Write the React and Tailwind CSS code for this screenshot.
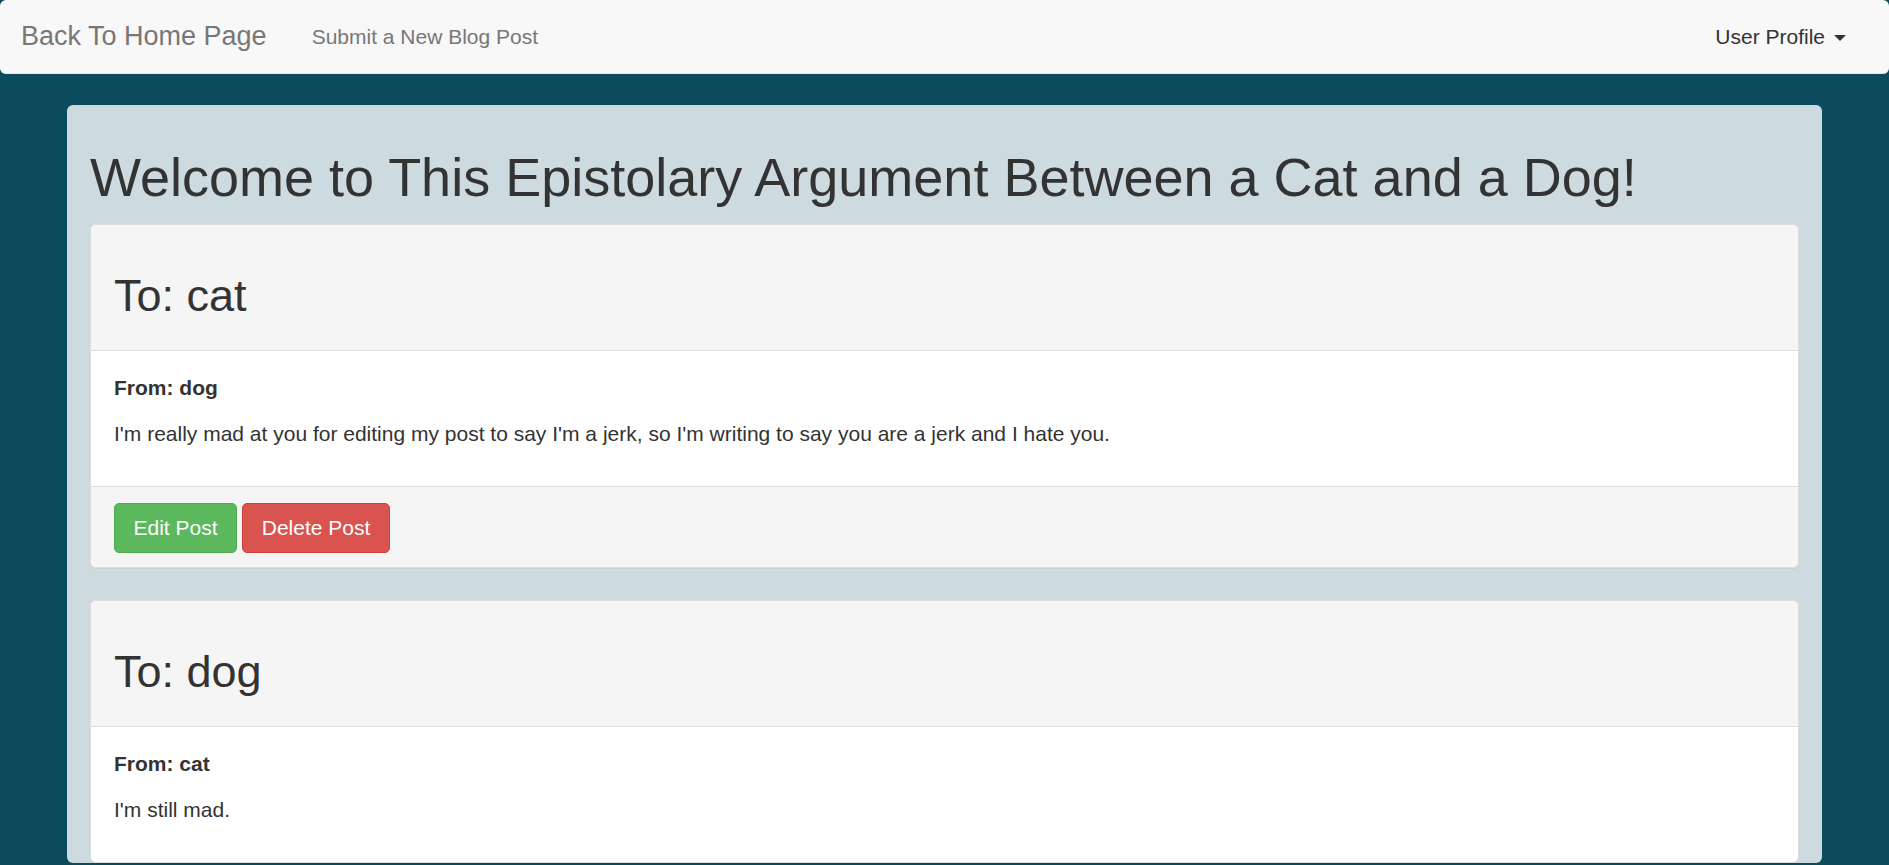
const posts = [
  {
    to: 'cat',
    from: 'dog',
    body: "I'm really mad at you for editing my post to say I'm a jerk, so I'm writing to say you are a jerk and I hate you.",
    actions: true,
  },
  {
    to: 'dog',
    from: 'cat',
    body: "I'm still mad.",
    actions: false,
  },
];

function PostCard({ post }) {
  return (
    <div className="mb-[32px] overflow-hidden rounded-[6px] border border-[#dddddd] bg-white shadow-[0_1px_1px_rgba(0,0,0,0.05)]">
      {/* Heading */}
      <div className="border-b border-[#dddddd] bg-[#f5f5f5] px-[23px] pt-[46px] pb-[29px]">
        <h2 className="text-[45px] leading-[50px]">To: {post.to}</h2>
      </div>

      {/* Body */}
      <div className="px-[23px] pt-[22px] pb-[23px]">
        <p className="mb-[16px] text-[21px] font-bold leading-[30px]">From: {post.from}</p>
        <p className="mb-[14px] text-[21px] leading-[30px]">{post.body}</p>
      </div>

      {/* Footer */}
      {post.actions && (
        <div className="flex gap-[5px] border-t border-[#dddddd] bg-[#f5f5f5] px-[23px] pt-[16px] pb-[14px]">
          <button className="flex h-[50px] w-[123px] items-center justify-center rounded-[5px] border border-[#4cae4c] bg-[#5cb85c] text-[21px] text-white">
            Edit Post
          </button>
          <button className="flex h-[50px] w-[148px] items-center justify-center rounded-[5px] border border-[#d43f3a] bg-[#d9534f] text-[21px] text-white">
            Delete Post
          </button>
        </div>
      )}
    </div>
  );
}

export default function App() {
  return (
    <div className="h-[865px] overflow-hidden bg-[#0c4b5e] font-['Liberation_Sans',Arial,sans-serif] text-[#333333]">
      {/* Navbar */}
      <nav className="flex h-[74px] items-center rounded-[6px] border-b border-[#e7e7e7] bg-[#f8f8f8] pl-[21px] pr-[43px]">
        <a className="text-[27px] text-[#777777]">Back To Home Page</a>
        <a className="ml-[45px] text-[21px] text-[#777777]">Submit a New Blog Post</a>
        <div className="ml-auto flex items-center text-[21px] text-[#333333]">
          User Profile
          <span className="ml-[9px] mt-[2px] h-0 w-0 border-x-[6px] border-t-[6px] border-x-transparent border-t-[#333333]" />
        </div>
      </nav>

      {/* Main container */}
      <div className="mx-[67px] mt-[31px] rounded-[6px] bg-[#cddbe0] px-[23px] pt-[43px]">
        <h1 className="text-[54px] leading-[59px]">
          Welcome to This Epistolary Argument Between a Cat and a Dog!
        </h1>
        <div className="mt-[17px]">
          {posts.map((post) => (
            <PostCard key={post.to} post={post} />
          ))}
        </div>
      </div>
    </div>
  );
}
